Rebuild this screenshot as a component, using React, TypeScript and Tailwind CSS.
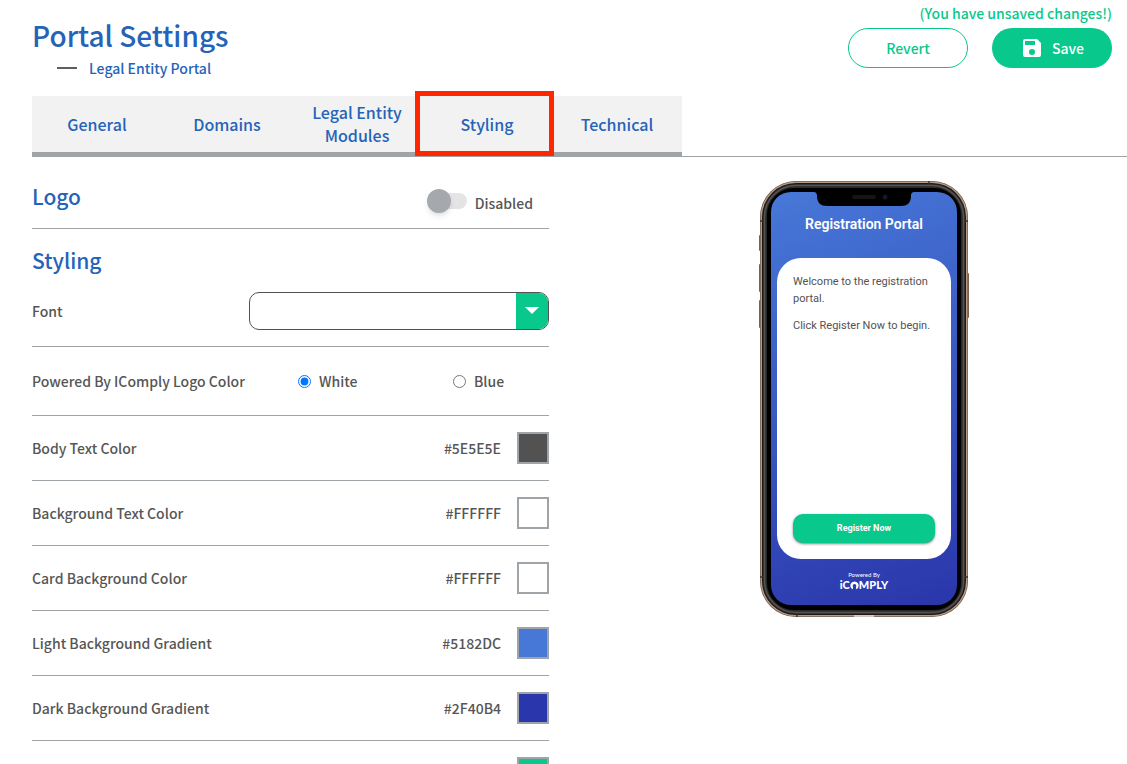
import { useState, type ReactNode } from "react";

const tabs = ["General", "Domains", "Legal Entity Modules", "Styling", "Technical"];

const colors = [
  { name: "Body Text Color", hex: "#5E5E5E", swatch: "bg-[#525252]" },
  { name: "Background Text Color", hex: "#FFFFFF", swatch: "bg-white" },
  { name: "Card Background Color", hex: "#FFFFFF", swatch: "bg-white" },
  { name: "Light Background Gradient", hex: "#5182DC", swatch: "bg-[#4778d8]" },
  { name: "Dark Background Gradient", hex: "#2F40B4", swatch: "bg-[#2a36ab]" },
  { name: "Button Color", hex: "#06C88B", swatch: "bg-[#08c88c]" },
];

function Row({ children, className }: { children: ReactNode; className: string }) {
  return (
    <div className={`flex items-center justify-between border-b border-[#9fa4a9] ${className}`}>
      {children}
    </div>
  );
}

function Header() {
  return (
    <header className="flex items-start justify-between pt-1 pr-[15px] pl-8">
      <div className="pt-[11px] pb-px">
        <h1 className="text-[28px] leading-10 text-[#2563b8]">Portal Settings</h1>
        <div className="flex items-center gap-3 pt-0.5 pl-[25px] leading-[22px]">
          <span className="h-0.5 w-5 bg-[#5e5e5e]" />
          <span className="text-[#2563b8]">Legal Entity Portal</span>
        </div>
      </div>
      <div className="flex flex-col items-end gap-1.5">
        <p className="leading-[18px] text-[#08c88c]">(You have unsaved changes!)</p>
        <div className="flex gap-6">
          <button className="h-10 w-[120px] rounded-full border border-[#08c88c] text-[#08c88c]">
            Revert
          </button>
          <button className="flex h-10 w-[120px] items-center justify-center gap-2 rounded-full bg-[#08c88c] text-white">
            <svg viewBox="0 0 24 24" className="size-6" fill="currentColor" aria-hidden="true">
              <path d="M17 3H5a2 2 0 0 0-2 2v14a2 2 0 0 0 2 2h14a2 2 0 0 0 2-2V7l-4-4zm-5 16a3 3 0 1 1 0-6 3 3 0 0 1 0 6zm3-10H5V5h10v4z" />
            </svg>
            Save
          </button>
        </div>
      </div>
    </header>
  );
}

function Tabs() {
  return (
    <nav className="ml-8 flex border-b border-[#9fa4a9]">
      {tabs.map((tab) => (
        <button
          key={tab}
          className="relative flex h-15 w-[130px] items-center justify-center border-b-4 border-[#9fa4a9] bg-[#f2f2f2] px-4 text-base leading-[23px] text-[#2563b8]"
        >
          {tab}
          {tab === "Styling" && (
            <span className="absolute -top-[5px] -right-0.5 -bottom-1 -left-[7px] z-10 border-5 border-[#ff2600]" />
          )}
        </button>
      ))}
    </nav>
  );
}

function Phone() {
  return (
    <div className="relative h-[436px] w-[210px]">
      <svg viewBox="0 0 210 436" className="absolute inset-0 size-full" aria-hidden="true">
        <defs>
          <linearGradient id="screen" gradientUnits="userSpaceOnUse" x1="28" y1="5" x2="182" y2="429">
            <stop offset="0" stopColor="#4778d8" />
            <stop offset="1" stopColor="#2a36ab" />
          </linearGradient>
        </defs>
        <g fill="#7d5f4b">
          <rect x="0" y="54" width="3" height="16" rx="1" />
          <rect x="0" y="83" width="3" height="28" rx="1" />
          <rect x="0" y="119" width="3" height="28" rx="1" />
          <rect x="206" y="92" width="4" height="45" rx="1" />
        </g>
        <rect x="1" y="0" width="208" height="436" rx="36" fill="#5c4536" />
        <rect x="1.5" y="0.5" width="207" height="435" rx="35.5" fill="#b79a84" />
        <rect x="3" y="2" width="204" height="432" rx="34" fill="#1c1a19" />
        <rect x="4" y="3" width="202" height="430" rx="33" fill="#2c2c2c" />
        <rect x="5.5" y="4.5" width="199" height="427" rx="31.5" fill="#2a2a2a" stroke="#545454" strokeWidth="1.5" />
        <rect x="8" y="7" width="194" height="422" rx="27" fill="#000" />
        <path d="M1 40h3M206 40h3M1 396h3M206 396h3M170 0v3M38 433v3" stroke="#3d2f26" strokeWidth="1.5" />
        <rect x="12" y="11" width="186" height="413" rx="20" fill="url(#screen)" />
        <path d="M54 11h102c-3 0-4 1-4 4 0 7-4 10-10 10H68c-6 0-10-3-10-10 0-3-1-4-4-4z" fill="#000" />
        <rect x="93" y="14" width="24" height="4" rx="2" fill="#151515" />
        <circle cx="126" cy="16" r="2.5" fill="#10182c" />
        <path d="M95 435h20" stroke="#e8ddd5" strokeWidth="1.5" />
      </svg>
      <div className="relative flex h-full flex-col px-[18px] pt-[33px] font-[Roboto,sans-serif] font-normal">
        <h2 className="text-center text-sm leading-5 font-semibold text-white">Registration Portal</h2>
        <div className="mt-6 flex h-[301px] flex-col justify-between rounded-[24px] bg-white px-4 pt-[15px] pb-4">
          <div className="space-y-2.5 text-[11px] leading-[17px] text-[#525252]">
            <p>Welcome to the registration portal.</p>
            <p>Click Register Now to begin.</p>
          </div>
          <button className="h-[29px] rounded-[10px] bg-[#08c88c] pb-0.5 text-[9px] font-bold text-white shadow-sm shadow-black/40">
            Register Now
          </button>
        </div>
        <div className="mt-3 flex flex-col items-center gap-px font-[Lato,sans-serif] text-white">
          <span className="text-[6px] leading-2">Powered By</span>
          <span className="flex items-center text-[11px] leading-2.5 font-black">
            iC
            <svg viewBox="0 0 10 10" className="size-[9px]" aria-hidden="true">
              <path
                d="M3 9.200A4.600 4.600 0 1 1 7 9.200L6.500 6.800A2 2 0 0 0 7 5.300a2 2 0 0 0-4 0c0 .6.200 1.100.500 1.500z"
                fill="white"
              />
              <path d="M4.300 9.800 4.600 6h.8l.3 3.800z" fill="#2c3cb0" />
            </svg>
            MPLY
          </span>
        </div>
      </div>
    </div>
  );
}

export default function App() {
  const [enabled, setEnabled] = useState(false);
  const [logoColor, setLogoColor] = useState("White");

  return (
    <div className="h-screen overflow-hidden bg-white font-['Noto_Sans_CJK_SC',sans-serif] text-sm leading-4 font-medium text-[#565656]">
      <Header />
      <div className="mt-4">
        <Tabs />
      </div>
      <main className="flex pl-8">
        <section className="w-[517px] shrink-0">
          <Row className="h-18">
            <h2 className="pt-1.5 text-[21px] leading-8 text-[#2563b8]">Logo</h2>
            <label className="flex items-start gap-2 pt-5 pr-4 leading-7">
              <span className="relative flex h-6 w-10 items-center">
                <input
                  type="checkbox"
                  role="switch"
                  checked={enabled}
                  onChange={(e) => setEnabled(e.target.checked)}
                  className="peer ml-2 h-4 w-8 appearance-none rounded-full bg-[#e4e4e4]"
                />
                <span className="pointer-events-none absolute left-0 size-6 rounded-full bg-[#a5a9ae] shadow-md peer-checked:left-4" />
              </span>
              {enabled ? "Enabled" : "Disabled"}
            </label>
          </Row>
          <h2 className="pt-4 text-[21px] leading-[30px] text-[#2563b8]">Styling</h2>
          <Row className="h-18">
            <label htmlFor="font">Font</label>
            <div className="relative flex h-[38px] w-[300px] overflow-hidden rounded-[10px] border border-[#525252]">
              <select id="font" defaultValue="" className="min-w-0 flex-1 appearance-none bg-transparent pr-10 pl-3">
                <option value=""></option>
                <option>Roboto</option>
                <option>Lato</option>
              </select>
              <span className="pointer-events-none absolute inset-y-0 right-0 flex w-8 items-center justify-center bg-[#08c88c]">
                <svg viewBox="0 0 14 7" className="h-[7px] w-3.5" aria-hidden="true">
                  <path d="M0 0h14L7 7z" fill="white" />
                </svg>
              </span>
            </div>
          </Row>
          <Row className="h-[69px]">
            <span>Powered By IComply Logo Color</span>
            <div className="flex">
              {["White", "Blue"].map((option) => (
                <label key={option} className="flex w-[155px] items-center gap-2 last:w-[96px]">
                  <input
                    type="radio"
                    name="logo-color"
                    checked={logoColor === option}
                    onChange={() => setLogoColor(option)}
                    className="size-[13px]"
                  />
                  {option}
                </label>
              ))}
            </div>
          </Row>
          {colors.map((color) => (
            <Row key={color.name} className="h-[65px]">
              <span>{color.name}</span>
              <div className="flex items-center gap-4">
                <span>{color.hex}</span>
                <button
                  aria-label={color.name}
                  className={`size-8 border-2 border-[#9fa4a9] ${color.swatch}`}
                />
              </div>
            </Row>
          ))}
        </section>
        <aside className="flex flex-1 items-start justify-center pt-6 pl-[52px]">
          <Phone />
        </aside>
      </main>
    </div>
  );
}
